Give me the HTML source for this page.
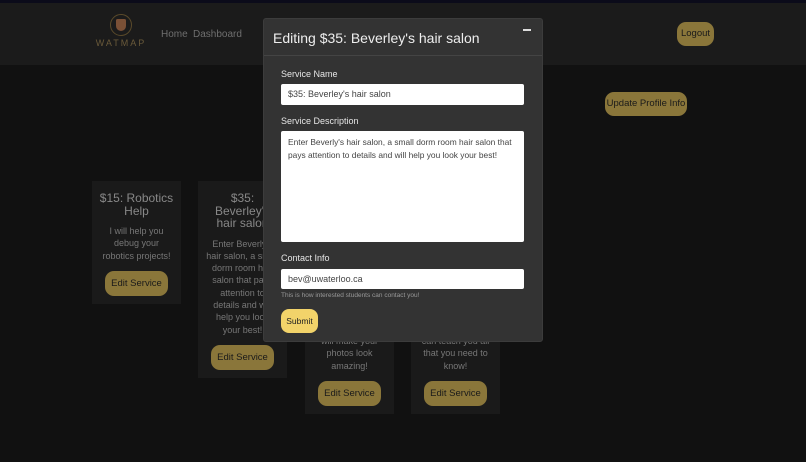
<!DOCTYPE html>
<html><head><style>
*{box-sizing:border-box;margin:0;padding:0}
body{width:806px;height:462px;background:#111;font-family:"Liberation Sans",sans-serif;position:relative;overflow:hidden;color:#888}
.top{position:absolute;left:0;top:0;width:806px;height:3px;background:#0b0b1a}
.nav{position:absolute;left:0;top:3px;width:806px;height:62px;background:#1b1b1b}
.logo{position:absolute;left:94px;top:14px;width:54px;text-align:center}
.logo .c{width:22px;height:22px;border-radius:50%;border:1px solid #5a4a2a;margin:0 auto;position:relative}
.logo .c:after{content:"";position:absolute;left:5px;top:4px;width:10px;height:12px;background:#7a5036;border-radius:2px 2px 6px 6px}
.logo .t{font-size:9px;letter-spacing:2px;color:#6a5a3a;margin-top:2px}
.nl{position:absolute;top:29px;font-size:10px;color:#6f6f6f}
.btn{position:absolute;background:#8a763a;color:#1a1a1a;border-radius:9px;font-size:9.5px;text-align:center;white-space:nowrap}
.card{position:absolute;background:#1a1a1a;text-align:center;width:89px}
.card h3{font-weight:normal;font-size:12px;color:#888;line-height:12.5px;margin-top:11px}
.card p{font-size:9px;color:#777;line-height:12.3px;margin-top:8px}
.card .eb{display:inline-block;background:#8a763a;color:#1a1a1a;border-radius:9px;font-size:9.5px;padding:7px 6px;margin-top:9px}
.modal{position:absolute;left:263px;top:18px;width:280px;height:324px;background:#333;border-radius:3px;border:1px solid #3c3c3c}
.mh{height:37px;border-bottom:1px solid #444;color:#eee;font-size:14px;padding:11px 0 0 9px}
.x{position:absolute;right:11px;top:10px;width:8px;height:2px;background:#ddd}
.lab{position:absolute;left:17px;font-size:9px;color:#e6e6e6}
.inp{position:absolute;left:17px;width:243px;background:#fff;border-radius:2px;font-size:9px;color:#444;padding:0 7px}
.sb{position:absolute;left:17px;top:290px;width:37px;height:24px;background:#f2d36a;border-radius:8px;font-size:8.5px;color:#222;text-align:center;line-height:24px}
</style></head><body>
<div class="top"></div>
<div class="nav"></div>
<div class="logo"><div class="c"></div><div class="t">WATMAP</div></div>
<div class="nl" style="left:161px">Home</div>
<div class="nl" style="left:193px">Dashboard</div>
<div class="btn" style="left:677px;top:22px;width:37px;height:24px;line-height:24px">Logout</div>
<div class="btn" style="left:605px;top:92px;width:82px;height:24px;line-height:24px">Update Profile Info</div>

<div class="card" style="left:92px;top:181px;height:123px"><h3>$15: Robotics<br>Help</h3><p>I will help you<br>debug your<br>robotics projects!</p><span class="eb">Edit Service</span></div>
<div class="card" style="left:198px;top:181px;height:197px"><h3>$35:<br>Beverley's<br>hair salon</h3><p>Enter Beverly's<br>hair salon, a small<br>dorm room hair<br>salon that pays<br>attention to<br>details and will<br>help you look<br>your best!</p><span class="eb">Edit Service</span></div>
<div class="card" style="left:305px;top:181px;height:233px"><p style="margin-top:154px">will make your<br>photos look<br>amazing!</p><span class="eb">Edit Service</span></div>
<div class="card" style="left:411px;top:181px;height:233px"><p style="margin-top:154px">can teach you all<br>that you need to<br>know!</p><span class="eb">Edit Service</span></div>

<div class="modal">
<div class="mh">Editing $35: Beverley's hair salon</div><div class="x"></div>
<div class="lab" style="top:50px">Service Name</div>
<div class="inp" style="top:65px;height:21px;line-height:21px">$35: Beverley's hair salon</div>
<div class="lab" style="top:97px">Service Description</div>
<div class="inp" style="top:112px;height:111px;padding-top:5px;line-height:12.5px;font-size:8.4px;white-space:nowrap">Enter Beverly's hair salon, a small dorm room hair salon that<br>pays attention to details and will help you look your best!</div>
<div class="lab" style="top:234px">Contact Info</div>
<div class="inp" style="top:250px;height:20px;line-height:20px">bev@uwaterloo.ca</div>
<div style="position:absolute;left:17px;top:273px;font-size:6.5px;color:#999">This is how interested students can contact you!</div>
<div class="sb">Submit</div>
</div>
</body></html>
